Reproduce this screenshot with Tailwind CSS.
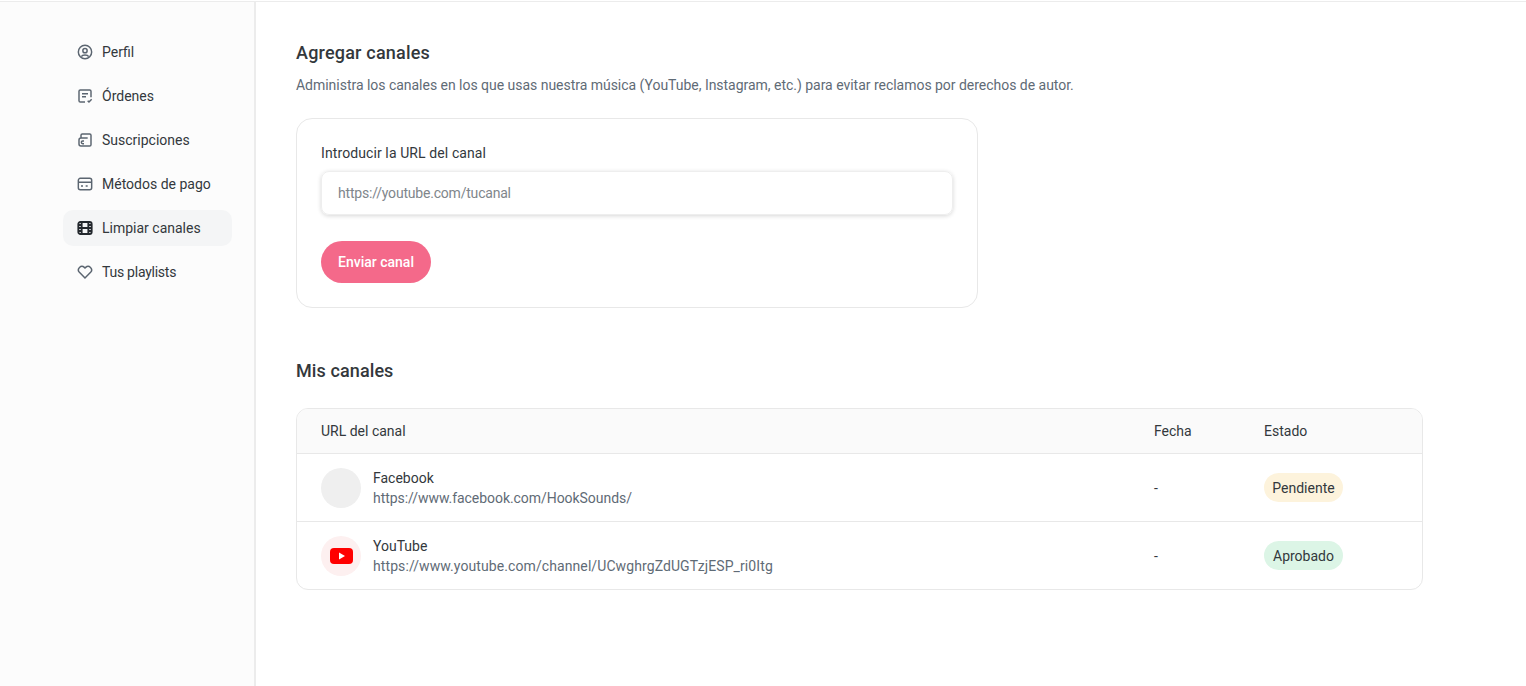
<!DOCTYPE html>
<html lang="en">
  <head>
    <meta charset="UTF-8" />
    <title>Limpiar canales</title>
    <script src="https://cdn.jsdelivr.net/npm/@tailwindcss/browser@4"></script>
  </head>
  <body class="h-[686px] overflow-hidden bg-white pt-px font-['Roboto',sans-serif] text-[14px] text-[#33383c]">
    <div class="flex h-full border-t border-[#ececec]">
      <!-- Sidebar -->
      <aside class="w-[256px] shrink-0 border-r-2 border-[#ececec] bg-[#fcfcfc] pl-[63px] pr-[22px] pt-[32px]">
        <nav class="flex flex-col gap-[8px]">
          <a class="flex h-[36px] items-center gap-[9px] whitespace-nowrap rounded-[10px] px-[14px]">
            <svg class="h-[16px] w-[16px]" viewBox="0 0 24 24" fill="none" stroke="#5b6570" stroke-width="2.2"><circle cx="12" cy="12" r="10"/><circle cx="12" cy="10" r="3.2"/><path d="M6.5 19c1.5-3.4 9.5-3.4 11 0"/></svg>
            Perfil
          </a>
          <a class="flex h-[36px] items-center gap-[9px] whitespace-nowrap rounded-[10px] px-[14px]">
            <svg class="h-[16px] w-[16px]" viewBox="0 0 24 24" fill="none" stroke="#5b6570" stroke-width="2.2"><path d="M12 21H5a2 2 0 0 1-2-2V5a2 2 0 0 1 2-2h14a2 2 0 0 1 2 2v9"/><path d="M7.5 8.5h9M7.5 13h6M16 19l2 2 4-4"/></svg>
            Órdenes
          </a>
          <a class="flex h-[36px] items-center gap-[9px] whitespace-nowrap rounded-[10px] px-[14px]">
            <svg class="h-[16px] w-[16px]" viewBox="0 0 24 24" fill="none" stroke="#5b6570" stroke-width="2.2"><path d="M6 9V5a2 2 0 0 1 2-2h11a2 2 0 0 1 2 2v14a2 2 0 0 1-2 2H6a3 3 0 0 1-3-3v-6a3 3 0 0 1 3-3h10"/><path d="M10.5 13.5H8.500a1.500 1.500 0 0 0 0 4h2"/></svg>
            Suscripciones
          </a>
          <a class="flex h-[36px] items-center gap-[9px] whitespace-nowrap rounded-[10px] px-[14px]">
            <svg class="h-[16px] w-[16px]" viewBox="0 0 24 24" fill="none" stroke="#5b6570" stroke-width="2.2"><rect x="2" y="3.5" width="20" height="17" rx="3"/><path d="M2 9.5h20M6 15h3M13 15h3"/></svg>
            Métodos de pago
          </a>
          <a class="flex h-[36px] items-center gap-[9px] whitespace-nowrap rounded-[10px] bg-[#f4f5f6] px-[14px]">
            <svg class="h-[16px] w-[16px]" viewBox="0 0 24 24" fill="none" stroke="#23282d" stroke-width="2.8"><rect x="2" y="3" width="20" height="18" rx="3"/><path d="M7 3v18M17 3v18M2 12h20M2 7.5h5M2 16.5h5M17 7.5h5M17 16.5h5"/></svg>
            Limpiar canales
          </a>
          <a class="flex h-[36px] items-center gap-[9px] whitespace-nowrap rounded-[10px] px-[14px] tracking-[-0.25px]">
            <svg class="h-[16px] w-[16px]" viewBox="0 0 24 24" fill="none" stroke="#5b6570" stroke-width="2.2"><path d="M12 21 3.6 12.4a5.2 5.2 0 0 1 7.4-7.3l1 1 1-1a5.2 5.2 0 0 1 7.4 7.3z"/></svg>
            Tus playlists
          </a>
        </nav>
      </aside>
      <!-- Main -->
      <main class="flex-1 pl-[40px] pr-[103px] pt-[39px]">
        <h2 class="text-[18px] font-medium leading-[24px] tracking-[0.2px]">Agregar canales</h2>
        <p class="mt-[10px] leading-[20px] tracking-[-0.025px] text-[#5f6b76]">Administra los canales en los que usas nuestra música (YouTube, Instagram, etc.) para evitar reclamos por derechos de autor.</p>
        <section class="mt-[23px] w-[682px] rounded-[16px] border border-[#e8e8e8] p-[24px]">
          <label class="block leading-[20px] tracking-[0.1px]">Introducir la URL del canal</label>
          <div class="mt-[8px] flex h-[44px] items-center rounded-[8px] border border-[#eeeeee] px-[16px] tracking-[-0.2px] text-[#80868b] shadow-[0_1px_4px_rgba(0,0,0,0.16)]">https://youtube.com/tucanal</div>
          <button class="mt-[26px] h-[42px] w-[110px] rounded-full bg-[#f4698a] font-medium text-white">Enviar canal</button>
        </section>
        <h2 class="mt-[51px] text-[18px] font-medium leading-[24px] tracking-[0.1px]">Mis canales</h2>
        <section class="mt-[25px] overflow-hidden rounded-[12px] border border-[#e8e8e8]">
          <div class="flex h-[45px] items-center border-b border-[#e8e8e8] bg-[#fafafa] px-[24px]">
            <span class="flex-1">URL del canal</span>
            <span class="w-[110px]">Fecha</span>
            <span class="w-[134px]">Estado</span>
          </div>
          <div class="flex h-[68px] items-center border-b border-[#e8e8e8] px-[24px]">
            <div class="flex flex-1 items-center gap-[12px]">
              <span class="h-[40px] w-[40px] rounded-full bg-[#efefef]"></span>
              <div class="leading-[20px]"><div>Facebook</div><div class="tracking-[-0.05px] text-[#5f6b76]">https://www.facebook.com/HookSounds/</div></div>
            </div>
            <span class="w-[110px] pt-[2px]">-</span>
            <span class="w-[134px]"><span class="inline-flex h-[29px] w-[79px] items-center justify-center rounded-full bg-[#fdf3dc] pt-px">Pendiente</span></span>
          </div>
          <div class="flex h-[67px] items-center px-[24px]">
            <div class="flex flex-1 items-center gap-[12px]">
              <span class="flex h-[40px] w-[40px] items-center justify-center rounded-full bg-[#fdf0f0]">
                <svg class="h-[16px] w-[23px]" viewBox="0 0 23 16"><rect width="23" height="16" rx="4" fill="#ff0000"/><path d="M9 4.5v7l6-3.5z" fill="#fff"/></svg>
              </span>
              <div class="leading-[20px]"><div>YouTube</div><div class="tracking-[0.09px] text-[#5f6b76]">https://www.youtube.com/channel/UCwghrgZdUGTzjESP_ri0Itg</div></div>
            </div>
            <span class="w-[110px] pt-[2px]">-</span>
            <span class="w-[134px]"><span class="inline-flex h-[29px] w-[79px] items-center justify-center rounded-full bg-[#dcf5e6] pt-px">Aprobado</span></span>
          </div>
        </section>
      </main>
    </div>
  </body>
</html>
